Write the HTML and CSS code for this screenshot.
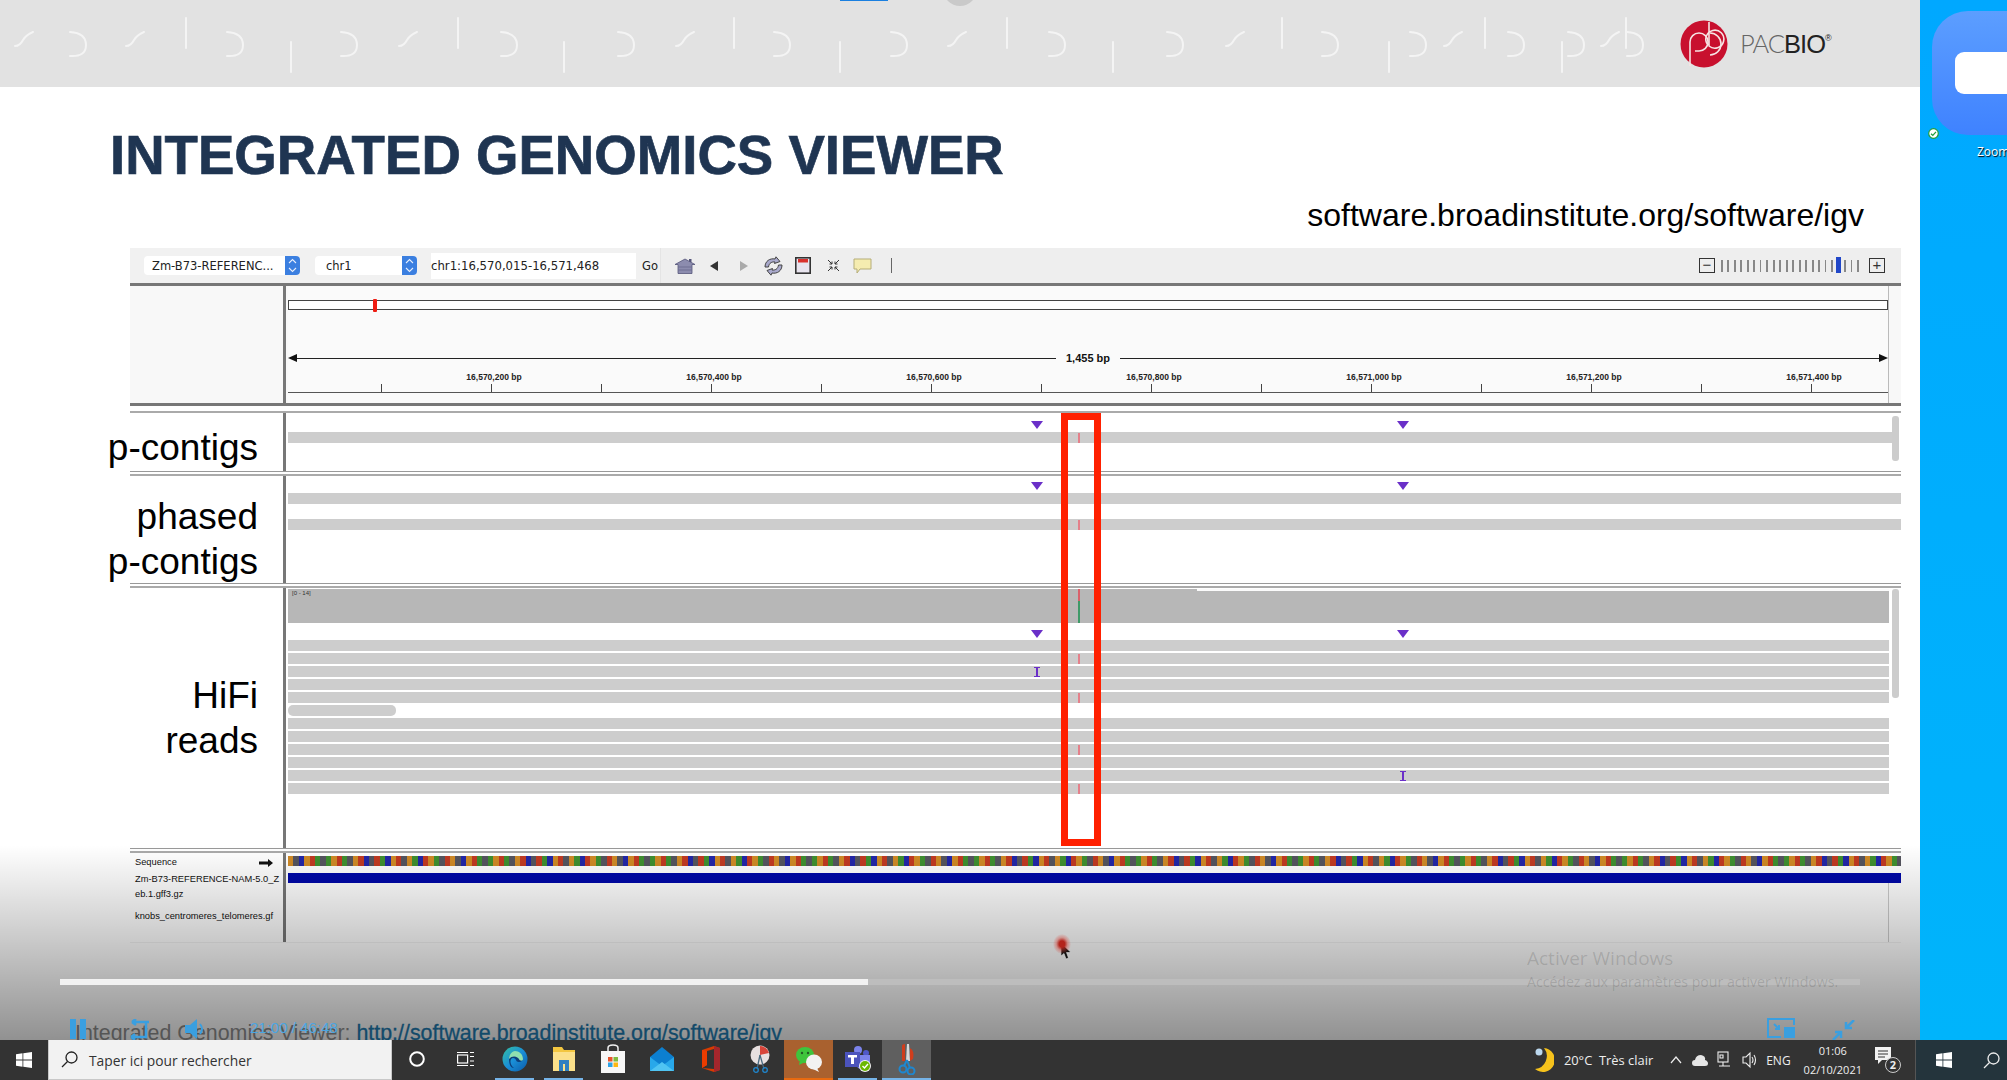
FILE: index.html
```html
<!DOCTYPE html>
<html lang="fr">

<head>
    <meta charset="UTF-8">
    <title>Integrated Genomics Viewer</title>
    <link rel="stylesheet" href="styles.css">
</head>

<body>
    <svg class="defs" width="0" height="0">
        <defs>
            <path id="sq-slash" d="M1 14Q6 14 9 8 12 3 19 0" />
            <path id="sq-curve" d="M1 1Q17 2 17 14Q17 26 1 25" />
            <path id="sq-bar" d="M1 0V30" />
            <g id="ms-logo">
                <path d="M0 2.2 6.5 1.3v6.3H0zM7.3 1.2 16 0v7.6H7.3zM0 8.4h6.5v6.3L0 13.8zM7.3 8.4H16V16l-8.7-1.2z" />
            </g>
            <g id="step-arrows" fill="none" stroke="#e6eefc" stroke-width="1.100">
                <path d="M4 7 7.500 3.500 11 7M4 12 7.500 15.500 11 12" />
            </g>
            <linearGradient id="edge-grad" x1="0" y1="0" x2="1" y2="1">
                <stop offset="0" stop-color="#35c1a0" />
                <stop offset=".5" stop-color="#1a8fd8" />
                <stop offset="1" stop-color="#0b5aa8" />
            </linearGradient>
        </defs>
    </svg>

    <div class="screen">
        <div class="stage">
            <div class="slide">
                <div class="slide-head">
                    <svg class="squiggles" width="1680" height="87">
                        <g fill="none" stroke="#f4f4f4" stroke-width="2" stroke-linecap="round">
                            <use href="#sq-slash" x="14" y="32" />
                            <use href="#sq-slash" x="125" y="32" />
                            <use href="#sq-slash" x="398" y="32" />
                            <use href="#sq-slash" x="675" y="32" />
                            <use href="#sq-slash" x="947" y="32" />
                            <use href="#sq-slash" x="1225" y="32" />
                            <use href="#sq-slash" x="1443" y="32" />
                            <use href="#sq-slash" x="1600" y="32" />
                            <use href="#sq-curve" x="69" y="31" />
                            <use href="#sq-curve" x="226" y="31" />
                            <use href="#sq-curve" x="340" y="31" />
                            <use href="#sq-curve" x="500" y="31" />
                            <use href="#sq-curve" x="617" y="31" />
                            <use href="#sq-curve" x="773" y="31" />
                            <use href="#sq-curve" x="890" y="31" />
                            <use href="#sq-curve" x="1048" y="31" />
                            <use href="#sq-curve" x="1166" y="31" />
                            <use href="#sq-curve" x="1321" y="31" />
                            <use href="#sq-curve" x="1409" y="31" />
                            <use href="#sq-curve" x="1507" y="31" />
                            <use href="#sq-curve" x="1567" y="31" />
                            <use href="#sq-curve" x="1626" y="31" />
                            <use href="#sq-bar" x="185" y="18" />
                            <use href="#sq-bar" x="457" y="18" />
                            <use href="#sq-bar" x="733" y="18" />
                            <use href="#sq-bar" x="1006" y="18" />
                            <use href="#sq-bar" x="1281" y="18" />
                            <use href="#sq-bar" x="1484" y="18" />
                            <use href="#sq-bar" x="1625" y="18" />
                            <use href="#sq-bar" x="290" y="42" />
                            <use href="#sq-bar" x="563" y="42" />
                            <use href="#sq-bar" x="839" y="42" />
                            <use href="#sq-bar" x="1112" y="42" />
                            <use href="#sq-bar" x="1388" y="42" />
                            <use href="#sq-bar" x="1561" y="42" />
                        </g>
                    </svg>
                    <svg class="pb-logo" viewBox="0 0 48 48" width="48" height="48">
                        <circle cx="24" cy="24" r="23.5" fill="#c8102e" />
                        <g fill="none" stroke="#f6e4e4" stroke-width="1.6">
                            <path d="M10 46V22a9 9 0 1 1 9 9h-4" />
                            <path d="M29 2V26a9 9 0 1 0 -1 -1" />
                            <path d="M30 13a11 11 0 0 1 0 22" />
                        </g>
                    </svg>
                    <div class="pb-name"><span class="pb-thin">PAC</span>BIO<sup>®</sup></div>
                    <div class="top-tab"></div>
                    <div class="top-dot"></div>
                </div>

                <h1 class="slide-title">INTEGRATED GENOMICS VIEWER</h1>
                <p class="slide-url">software.broadinstitute.org/software/igv</p>

                <div class="igv">
                    <div class="toolbar">
                        <div class="tb-left">
                            <div class="select select-genome"><span>Zm-B73-REFERENC...</span><svg class="stepper" width="15" height="19" viewBox="0 0 15 19"><use href="#step-arrows" /></svg></div>
                            <div class="select select-chr"><span>chr1</span><svg class="stepper" width="15" height="19" viewBox="0 0 15 19"><use href="#step-arrows" /></svg></div>
                            <div class="locus">chr1:16,570,015-16,571,468</div>
                            <span class="go">Go</span>
                        </div>
                        <div class="tools">
                            <svg class="t-home" width="20" height="16" viewBox="0 0 20 16">
                                <path d="M14 1H16.500V4H14Z" fill="#55557a" />
                                <path d="M10 1 20 6.5H17V15.5H3V6.5H0Z" fill="#8c8cae" stroke="#55557a" stroke-width=".8" />
                                <path d="M3 9H17M3 12H17" stroke="#6e6e92" />
                            </svg>
                            <svg class="t-back" width="8" height="10" viewBox="0 0 8 10"><path d="M8 0V10L0 5Z" fill="#333" /></svg>
                            <svg class="t-fwd" width="8" height="10" viewBox="0 0 8 10"><path d="M0 0V10L8 5Z" fill="#aaa" /></svg>
                            <svg class="t-sync" width="21" height="20" viewBox="0 0 21 20">
                                <g fill="#a9a9cc" stroke="#444" stroke-width="1">
                                    <path d="M2 11C2 5 7 2 12 3L13 .8 17 5.500 11.500 7.500 12 6C9 5.500 6 7 5.500 11Z" />
                                    <path d="M19 9C19 15 14 18 9 17L8 19.200 4 14.500 9.500 12.500 9 14C12 14.500 15 13 15.500 9Z" />
                                </g>
                            </svg>
                            <svg class="t-region" width="16" height="17" viewBox="0 0 16 17">
                                <rect x=".8" y=".8" width="14.400" height="15.400" fill="#e8e4ee" stroke="#333" stroke-width="1.600" />
                                <rect x="3" y="2" width="10" height="3.500" fill="#d9302c" />
                            </svg>
                            <svg class="t-fit" width="13" height="13" viewBox="0 0 13 13">
                                <path d="M1 1 5 5M12 1 8 5M1 12 5 8M12 12 8 8M5 2.500V5H2.500M8 2.500V5H10.500M5 10.500V8H2.500M8 10.500V8H10.500" stroke="#333" fill="none" />
                            </svg>
                            <svg class="t-note" width="19" height="16" viewBox="0 0 19 16">
                                <path d="M1 1H18V11H7L4 15V11H1Z" fill="#f5ecb0" stroke="#b5ad78" />
                            </svg>
                            <i class="t-sep"></i>
                        </div>
                        <div class="zoomer">
                            <i class="zoom-btn">−</i>
                            <div class="zoom-ticks"><i class="zoom-thumb"></i></div>
                            <i class="zoom-btn">+</i>
                        </div>
                    </div>

                    <div class="row row-ruler">
                        <div class="row-label"></div>
                        <div class="row-body">
                            <div class="ruler">
                                <div class="ideogram"><i class="ideo-mark"></i></div>
                                <div class="span-line">
                                    <i class="arrow-l"></i><i class="span-rule"></i><b>1,455 bp</b><i class="span-rule"></i><i class="arrow-r"></i>
                                </div>
                                <div class="coords">
                                    <span>16,570,200 bp</span><span>16,570,400 bp</span><span>16,570,600 bp</span><span>16,570,800 bp</span><span>16,571,000 bp</span><span>16,571,200 bp</span><span>16,571,400 bp</span>
                                </div>
                                <div class="ticks"></div>
                            </div>
                        </div>
                    </div>

                    <div class="row track-one">
                        <div class="row-label side-label label-one">p-contigs</div>
                        <div class="row-body">
                            <div class="marks marks-one"><i class="tri tri-a"></i><i class="tri tri-b"></i></div>
                            <div class="band band-short"><i class="snp"></i></div>
                            <i class="scroll scroll-one"></i>
                        </div>
                    </div>

                    <div class="row track-two">
                        <div class="row-label side-label label-two">phased<br>p-contigs</div>
                        <div class="row-body">
                            <div class="marks marks-two"><i class="tri tri-a"></i><i class="tri tri-b"></i></div>
                            <div class="band"></div>
                            <div class="band band-gap"><i class="snp"></i></div>
                        </div>
                    </div>

                    <div class="row track-three">
                        <div class="row-label side-label label-three">HiFi<br>reads</div>
                        <div class="row-body">
                            <div class="coverage"><i class="cov-notch"></i><span class="cov-range">[0 - 14]</span><i class="cov-snp"></i></div>
                            <div class="marks marks-three"><i class="tri tri-a"></i><i class="tri tri-b"></i></div>
                            <div class="read"></div>
                            <div class="read"><i class="snp"></i></div>
                            <div class="read"><i class="ins ins-a"></i></div>
                            <div class="read"></div>
                            <div class="read"><i class="snp"></i></div>
                            <div class="read read-short"></div>
                            <div class="read"></div>
                            <div class="read"></div>
                            <div class="read"><i class="snp"></i></div>
                            <div class="read"></div>
                            <div class="read"><i class="ins ins-b"></i></div>
                            <div class="read"><i class="snp"></i></div>
                            <i class="scroll scroll-three"></i>
                        </div>
                    </div>

                    <div class="row row-seq">
                        <div class="row-label seq-labels">
                            <div class="seq-name">Sequence <svg width="14" height="8" viewBox="0 0 14 8"><path d="M0 2.500H9V0L14 4 9 8V5.500H0Z" fill="#111" /></svg></div>
                            <div class="gene-name">Zm-B73-REFERENCE-NAM-5.0_Z<br>eb.1.gff3.gz</div>
                            <div class="knob-name">knobs_centromeres_telomeres.gf</div>
                        </div>
                        <div class="row-body">
                            <div class="sequence"></div>
                            <div class="gene"></div>
                        </div>
                    </div>

                    <div class="callout"></div>
                </div>

                <div class="player">
                    <div class="seek"><i class="seek-done"></i></div>
                    <div class="caption">Integrated Genomics Viewer: <a class="caption-link">http://software.broadinstitute.org/software/igv</a></div>

                    <div class="ctl ctl-pause"><i></i><i></i></div>
                    <svg class="ctl ctl-repeat" width="23" height="22" viewBox="0 0 23 22">
                        <path d="M22 3H5M5 3 9 0M5 3 9 6M19 3V18H4M4 18 8 15M4 18 8 21" fill="none" stroke="#3a9fe0" stroke-width="2.500" />
                    </svg>
                    <svg class="ctl ctl-volume" width="22" height="22" viewBox="0 0 22 22">
                        <path d="M0 7H5L12 1V21L5 15H0Z" fill="#3a9fe0" />
                        <path d="M15 6Q19 11 15 16" fill="none" stroke="#3a9fe0" stroke-width="2" />
                    </svg>
                    <span class="ctl ctl-time">21:00 / 46:48</span>
                    <svg class="ctl ctl-pip" width="29" height="20" viewBox="0 0 29 20">
                        <path d="M27 7V1H1V19H14" fill="none" stroke="#3a9fe0" stroke-width="2" />
                        <rect x="17" y="9" width="11" height="11" fill="#3a9fe0" />
                        <path d="M7 6 12 11M12 7V11H8" fill="none" stroke="#3a9fe0" stroke-width="2" />
                    </svg>
                    <svg class="ctl ctl-shrink" width="23" height="20" viewBox="0 0 23 20">
                        <path d="M22 0 15 7M14 2V8H20M1 20 8 13M9 18V12H3" fill="none" stroke="#3a9fe0" stroke-width="2.500" />
                    </svg>

                    <div class="activate">
                        <div class="activate-main">Activer Windows</div>
                        <div class="activate-sub">Accédez aux paramètres pour activer Windows.</div>
                    </div>

                    <div class="pointer"><i class="pointer-dot"></i>
                        <svg width="10" height="17" viewBox="0 0 10 17"><path d="M0 0V13L3 10.500 5 16 7.500 15 5.500 9.500H10Z" fill="#111" stroke="#ddd" stroke-width=".6" /></svg>
                    </div>
                </div>
            </div>

            <div class="desktop">
                <div class="zoom-tile"><div class="zoom-cam"></div></div>
                <svg class="sync-ok" width="11" height="11" viewBox="0 0 11 11">
                    <circle cx="5.500" cy="5.500" r="4.800" fill="#fff" stroke="#1f9d3c" stroke-width="1.200" />
                    <path d="M3 5.800 4.800 7.500 8 3.800" fill="none" stroke="#1f9d3c" stroke-width="1.200" />
                </svg>
                <span class="zoom-label">Zoom</span>
            </div>
        </div>

        <div class="taskbar">
            <div class="task-start"><svg width="16" height="16" viewBox="0 0 16 16" fill="#fff"><use href="#ms-logo" /></svg></div>
            <div class="task-search">
                <svg width="17" height="17" viewBox="0 0 17 17" fill="none" stroke="#222" stroke-width="1.300">
                    <circle cx="10.500" cy="6.500" r="5.500" />
                    <path d="M6.500 10.500 1 16" />
                </svg>
                <span>Taper ici pour rechercher</span>
            </div>
            <div class="slot">
                <svg width="16" height="16" viewBox="0 0 16 16"><circle cx="8" cy="8" r="6.800" fill="none" stroke="#fff" stroke-width="2" /></svg>
            </div>
            <div class="slot">
                <svg width="17" height="16" viewBox="0 0 17 16" fill="none" stroke="#fff" stroke-width="1.200">
                    <rect x=".6" y="4" width="10" height="8" />
                    <path d="M0 1.500H11M0 14.500H11M13 1.500H17M13 5.500H17M13 10H17M13 14.500H17" />
                </svg>
            </div>
            <div class="slot slot-open">
                <svg width="26" height="26" viewBox="0 0 26 26">
                    <circle cx="13" cy="13" r="12.500" fill="url(#edge-grad)" />
                    <path d="M7 13C7 8 13 6 17 8 22 10 22 16 17 16 13 16 15 12 11 12 8 12 7 18 12 22 8 22 7 17 7 13Z" fill="#0d3f7c" />
                    <path d="M13 5C17 5 21 8 21 13 21 15 19 15 17.500 14 16 10 10 9 7 13 7 9 10 5 13 5Z" fill="#8fe0b0" />
                </svg>
            </div>
            <div class="slot slot-open">
                <svg width="22" height="24" viewBox="0 0 22 24">
                    <path d="M0 0H9L11 3H22V24H0Z" fill="#f3c640" />
                    <path d="M0 5H22V24H0Z" fill="#fbe08a" />
                    <path d="M6 24V13H16V24H12V17H10V24Z" fill="#2f7fc1" />
                </svg>
            </div>
            <div class="slot">
                <svg width="24" height="30" viewBox="0 0 24 30">
                    <path d="M7 8V4Q7 1 12 1 17 1 17 4V8" fill="none" stroke="#f0f0f0" stroke-width="1.500" />
                    <rect y="7" width="24" height="22" fill="#f7f7f7" />
                    <rect x="7" y="13" width="4.500" height="4.500" fill="#e8532b" />
                    <rect x="12.500" y="13" width="4.500" height="4.500" fill="#7fbb3f" />
                    <rect x="7" y="18.500" width="4.500" height="4.500" fill="#2ea3e8" />
                    <rect x="12.500" y="18.500" width="4.500" height="4.500" fill="#fdb813" />
                </svg>
            </div>
            <div class="slot">
                <svg width="24" height="24" viewBox="0 0 24 24">
                    <path d="M0 10 12 0 24 10V24H0Z" fill="#0c7fd0" />
                    <path d="M0 10 12 19 24 10V24H0Z" fill="#28a8ea" />
                    <path d="M0 24 12 15 24 24Z" fill="#50c4f2" />
                </svg>
            </div>
            <div class="slot">
                <svg width="18" height="26" viewBox="0 0 18 26">
                    <path d="M0 4 12 0 18 2V24L12 26 0 22 12 23V3L5 5V19L0 22Z" fill="#d83b01" />
                    <path d="M12 0 18 2V24L12 26Z" fill="#a4262c" />
                    <path d="M0 4 5 5V19L0 22Z" fill="#eb3c00" />
                </svg>
            </div>
            <div class="slot">
                <svg width="22" height="28" viewBox="0 0 22 28">
                    <circle cx="11" cy="10" r="9.500" fill="#e8e0e0" />
                    <path d="M11 1A9 9 0 0 1 20 8L11 10Z" fill="#d8453a" />
                    <path d="M11 10 8 24M11 10 15 24" stroke="#4a6a80" stroke-width="1.300" />
                    <circle cx="7" cy="25" r="2.300" fill="none" stroke="#1f87cf" stroke-width="1.300" />
                    <circle cx="16" cy="25" r="2.300" fill="none" stroke="#1f87cf" stroke-width="1.300" />
                </svg>
            </div>
            <div class="slot slot-wechat">
                <svg width="26" height="26" viewBox="0 0 26 26">
                    <ellipse cx="9" cy="9" rx="9" ry="8" fill="#3ec43c" />
                    <path d="M4 14 3 19 9 16Z" fill="#3ec43c" />
                    <ellipse cx="18" cy="16" rx="8" ry="7.500" fill="#f2f2f2" />
                    <path d="M21 22 23 26 17 23Z" fill="#f2f2f2" />
                    <circle cx="6" cy="7" r="1.200" fill="#245a24" />
                    <circle cx="12" cy="7" r="1.200" fill="#245a24" />
                </svg>
            </div>
            <div class="slot slot-open">
                <svg width="28" height="28" viewBox="0 0 28 28">
                    <circle cx="14" cy="5" r="4" fill="#7b83eb" />
                    <circle cx="22" cy="8" r="3" fill="#5059c9" />
                    <path d="M12 10H26V20Q26 25 21 25 14 25 12 20Z" fill="#7b83eb" />
                    <rect x="1" y="7" width="15" height="15" fill="#4b53bc" />
                    <path d="M4 10H13V12.500H10V19H7V12.500H4Z" fill="#fff" />
                    <circle cx="21" cy="21" r="6" fill="#f2f2f2" />
                    <circle cx="21" cy="21" r="5" fill="#6bb700" />
                    <path d="M18.500 21 20.500 23 24 19" fill="none" stroke="#fff" stroke-width="1.400" />
                </svg>
            </div>
            <div class="slot slot-active">
                <svg width="18" height="32" viewBox="0 0 18 32">
                    <path d="M4 3Q4 1 7 1V18L4 18Z" fill="#cf3d1c" />
                    <path d="M11 1 12 18 8 18 9 1Z" fill="#d8d8d8" />
                    <path d="M12 5Q17 8 15 16L12 18Z" fill="#cf3d1c" />
                    <circle cx="5" cy="26" r="3.500" fill="none" stroke="#1f87cf" stroke-width="2" />
                    <circle cx="13" cy="28" r="3.500" fill="none" stroke="#1f87cf" stroke-width="2" />
                    <path d="M6 23 9 17M12 25 9 17" stroke="#1f87cf" stroke-width="2" />
                </svg>
            </div>

            <div class="tray">
                <svg class="tray-moon" width="20" height="26" viewBox="0 0 20 26">
                    <path d="M10 1A12 12 0 1 1 1 22 13 13 0 0 0 10 1Z" fill="#f6c21c" />
                    <circle cx="5" cy="5" r="3.500" fill="#bcd8ee" />
                </svg>
                <span class="tray-weather">20°C&nbsp;&nbsp;Très clair</span>
                <svg class="tray-caret" width="12" height="8" viewBox="0 0 12 8"><path d="M1 7 6 1 11 7" fill="none" stroke="#eee" stroke-width="1.200" /></svg>
                <svg class="tray-cloud" width="16" height="14" viewBox="0 0 16 14">
                    <path d="M3 13Q0 13 0 10 0 7 3 7 4 2 9 2 14 3 13 7 16 8 16 10.500 16 13 13 13Z" fill="#e6e6e6" />
                </svg>
                <svg class="tray-net" width="16" height="18" viewBox="0 0 16 18" fill="none" stroke="#eee" stroke-width="1.100">
                    <rect x="1" y="1" width="10" height="10" />
                    <path d="M6 11V15M2 15H13M3 4H6V7H3Z" />
                </svg>
                <svg class="tray-vol" width="15" height="18" viewBox="0 0 15 18" fill="none" stroke="#eee" stroke-width="1.100">
                    <path d="M1 6H4L8 2V16L4 12H1Z" />
                    <path d="M10 6Q12 9 10 12M12 4Q15 9 12 14" />
                </svg>
                <span class="tray-lang">ENG</span>
                <div class="tray-clock"><span>01:06</span><span>02/10/2021</span></div>
                <div class="tray-notes">
                    <svg width="17" height="18" viewBox="0 0 17 18"><path d="M0 0H16V13H7L3 17V13H0Z" fill="#f2f2f2" /><path d="M3 4H13M3 7H13M3 10H10" stroke="#333" stroke-width="1.200" /></svg>
                    <b>2</b>
                </div>
            </div>
            <div class="task-remote">
                <svg width="16" height="16" viewBox="0 0 16 16" fill="#fff"><use href="#ms-logo" /></svg>
                <svg width="17" height="17" viewBox="0 0 17 17" fill="none" stroke="#eee" stroke-width="1.300">
                    <circle cx="10.500" cy="6.500" r="5.500" />
                    <path d="M6.500 10.500 1 16" />
                </svg>
            </div>
        </div>
    </div>
</body>

</html>
```

FILE: styles.css
```css
* {
    box-sizing: border-box;
}

body {
    margin: 0;
    width: 2007px;
    height: 1080px;
    overflow: hidden;
    background-color: #333;
    font-family: "Liberation Sans", Arial, sans-serif;
}

i {
    display: block;
    font-style: normal;
}

.defs {
    position: absolute;
}

.screen {
    display: flex;
    flex-direction: column;
    height: 1080px;
}

.stage {
    display: flex;
    height: 1040px;
}

/* slide */

.slide {
    position: relative;
    flex: none;
    width: 1920px;
    overflow: hidden;
    background-color: #fff;
}

.slide-head {
    position: relative;
    display: flex;
    align-items: center;
    height: 87px;
    background-color: #e2e2e2;
}

.squiggles {
    flex: none;
}

.pb-logo {
    flex: none;
}

.pb-name {
    margin-left: 12px;
    font-size: 25.500px;
    line-height: 30px;
    font-weight: 400;
    letter-spacing: -1px;
    color: #222;
}

.pb-thin {
    font-family: Lato, sans-serif;
    font-weight: 300;
    color: #666;
}

.pb-name sup {
    font-size: 9px;
    line-height: 0;
    vertical-align: 12px;
}

.top-tab {
    position: absolute;
    left: 840px;
    top: 0;
    width: 48px;
    height: 1px;
    background-color: #1a7fe0;
}

.top-dot {
    position: absolute;
    left: 943px;
    top: -28px;
    width: 34px;
    height: 34px;
    border-radius: 50%;
    background-color: #c9c9c9;
}

.slide-title {
    margin: 41px 0 0 110px;
    font-size: 54.600px;
    line-height: 56px;
    font-weight: 700;
    white-space: nowrap;
    color: #1f3552;
    -webkit-text-stroke: 0.7px #1f3552;
}

.slide-url {
    margin: 13px 56px 0 0;
    font-size: 32px;
    line-height: 36px;
    text-align: right;
    color: #000;
}

/* igv panel */

.igv {
    position: relative;
    width: 1771px;
    margin: 15px 0 0 130px;
}

.toolbar {
    display: flex;
    align-items: center;
    height: 38px;
    border-bottom: 3px solid #777;
    background-color: #eee;
    font-family: "DejaVu Sans", sans-serif;
    font-size: 11.500px;
    color: #222;
}

.tb-left {
    display: flex;
    align-items: center;
    width: 531px;
    height: 35px;
    padding-left: 14px;
    border-right: 1px solid #e4e4e4;
    background-color: #f1f1f1;
}

.select {
    display: flex;
    align-items: center;
    justify-content: space-between;
    height: 19px;
    border-radius: 4px;
    background-color: #fff;
    white-space: nowrap;
}

.select-genome {
    width: 156px;
    padding-left: 8px;
}

.select-chr {
    width: 102px;
    margin-left: 15px;
    padding-left: 11px;
}

.stepper {
    flex: none;
    border-radius: 0 4px 4px 0;
    background-color: #3b7fe0;
}

.locus {
    width: 205px;
    height: 26px;
    margin-left: 14px;
    font-size: 11.700px;
    line-height: 26px;
    background-color: #fff;
    white-space: nowrap;
}

.go {
    margin-left: 6px;
}

.tools {
    display: flex;
    align-items: center;
    padding-left: 14px;
}

.t-back {
    margin-left: 15px;
}

.t-fwd {
    margin-left: 22px;
}

.t-sync {
    margin-left: 15px;
}

.t-region {
    margin-left: 11px;
}

.t-fit {
    margin-left: 16px;
}

.t-note {
    margin-left: 13px;
}

.t-sep {
    width: 1px;
    height: 15px;
    margin-left: 19px;
    background-color: #666;
}

.zoomer {
    display: flex;
    align-items: center;
    margin-left: auto;
    padding-right: 16px;
}

.zoom-btn {
    width: 16px;
    height: 15px;
    border: 1.500px solid #333;
    font-family: "Liberation Sans", sans-serif;
    font-size: 15px;
    line-height: 12px;
    text-align: center;
    color: #333;
}

.zoom-ticks {
    position: relative;
    width: 141px;
    height: 12px;
    margin: 0 7px 0 6px;
    background-image: repeating-linear-gradient(90deg, #888 0 1.500px, transparent 1.500px 6.500px);
}

.zoom-thumb {
    position: absolute;
    left: 115px;
    top: -3px;
    width: 5px;
    height: 16px;
    background-color: #2147c8;
}

.row {
    display: flex;
}

.row-label {
    flex: none;
    width: 153px;
}

.row-body {
    position: relative;
    flex: 1;
    padding-left: 2px;
    border-left: 3px solid #777;
}

.row-ruler {
    height: 120px;
    border-bottom: 3px solid #777;
    background-color: #f8f8f8;
}

.ruler {
    width: 1601px;
    height: 117px;
    padding-top: 14px;
    border-right: 1px solid #bbb;
    background-color: #fafafa;
}

.ideogram {
    position: relative;
    height: 10px;
    border: 1px solid #444;
    background-color: #fff;
}

.ideo-mark {
    position: absolute;
    left: 84px;
    top: -2px;
    width: 4px;
    height: 13px;
    border-radius: 1px;
    background-color: #ee1c12;
}

.span-line {
    display: flex;
    align-items: center;
    height: 14px;
    margin-top: 41px;
    font-size: 11px;
    color: #111;
}

.span-line b {
    padding: 0 10px;
}

.span-rule {
    flex: 1;
    height: 1px;
    background-color: #222;
}

.arrow-l {
    border-top: 4px solid transparent;
    border-bottom: 4px solid transparent;
    border-right: 9px solid #111;
}

.arrow-r {
    border-top: 4px solid transparent;
    border-bottom: 4px solid transparent;
    border-left: 9px solid #111;
}

.coords {
    display: grid;
    grid-template-columns: repeat(7, 220px);
    height: 12px;
    margin-top: 6px;
    padding-left: 96px;
    font-size: 8.500px;
    line-height: 12px;
    font-weight: 700;
    text-align: center;
    white-space: nowrap;
    color: #222;
}

.ticks {
    height: 9px;
    margin-top: 1px;
    border-bottom: 1px solid #555;
    background-image: linear-gradient(90deg, #444 1px, transparent 1px);
    background-size: 110px 100%;
    background-position: 93px 0;
    background-repeat: repeat-x;
}

.track-one,
.track-two,
.track-three {
    border-top: 2px solid #aaa;
    border-bottom: 1px solid #999;
}

.track-one {
    height: 61px;
    margin-top: 5px;
}

.track-two {
    height: 110px;
    margin-top: 2px;
}

.track-three {
    height: 263px;
    margin-top: 2px;
}

.side-label {
    width: 183px;
    margin-left: -30px;
    padding-right: 25px;
    font-size: 37px;
    line-height: 45px;
    text-align: right;
    white-space: nowrap;
    color: #000;
}

.label-one {
    padding-top: 12px;
}

.label-two {
    padding-top: 18px;
}

.label-three {
    padding-top: 85px;
}

.marks {
    position: relative;
}

.marks-one {
    height: 19px;
}

.marks-one .tri,
.marks-two .tri {
    bottom: 3px;
}

.marks-two {
    height: 17px;
}

.marks-three {
    height: 17px;
}

.tri {
    position: absolute;
    bottom: 2px;
    width: 0;
    height: 0;
    border-left: 6px solid transparent;
    border-right: 6px solid transparent;
    border-top: 8px solid #6a2fc8;
}

.tri-a {
    left: 743px;
}

.tri-b {
    left: 1109px;
}

.band {
    position: relative;
    height: 11px;
    background-color: #cdcdcd;
}

.band-short {
    width: 1604px;
}

.band-gap {
    margin-top: 15px;
}

.snp {
    position: absolute;
    left: 790px;
    top: 1px;
    width: 2px;
    height: 10px;
    background-color: #e4808a;
}

.coverage {
    position: relative;
    width: 1601px;
    height: 34px;
    margin-top: 1px;
    background-color: #b7b7b7;
}

.cov-notch {
    position: absolute;
    left: 909px;
    right: 0;
    top: 0;
    height: 2px;
    background-color: #fbfbfb;
}

.cov-range {
    position: absolute;
    left: 4px;
    top: 0;
    font-size: 6px;
    line-height: 9px;
    color: #333;
}

.cov-snp {
    position: absolute;
    left: 790px;
    top: 0;
    width: 2px;
    height: 34px;
    background-image: linear-gradient(#d9606a 35%, #3f9a68 35%);
}

.read {
    position: relative;
    width: 1601px;
    height: 11px;
    margin-bottom: 2px;
    background-color: #cdcdcd;
}

.read-short {
    width: 108px;
    border-radius: 5px;
}

.ins {
    position: absolute;
    top: 1px;
    width: 6px;
    height: 10px;
    border-top: 1.500px solid #6a2fc8;
    border-bottom: 1.500px solid #6a2fc8;
    background-image: linear-gradient(#6a2fc8, #6a2fc8);
    background-size: 2px 100%;
    background-position: center;
    background-repeat: no-repeat;
}

.ins-a {
    left: 746px;
}

.ins-b {
    left: 1112px;
}

.scroll {
    position: absolute;
    left: 1606px;
    width: 7px;
    border-radius: 3px;
    background-color: #ccc;
}

.scroll-one {
    top: 3px;
    height: 45px;
}

.scroll-three {
    top: 1px;
    height: 109px;
}

.row-seq {
    height: 92px;
    margin-top: 2px;
    border-top: 2px solid #aaa;
    border-bottom: 1px solid rgba(0, 0, 0, 0.05);
}

.seq-labels {
    padding: 2px 0 0 5px;
    font-size: 9.300px;
    line-height: 15px;
    color: #111;
}

.seq-name {
    display: flex;
    align-items: center;
    justify-content: space-between;
    height: 15px;
    padding-right: 10px;
}

.gene-name {
    margin-top: 2px;
    white-space: nowrap;
}

.knob-name {
    margin-top: 7px;
    white-space: nowrap;
}

.row-seq .row-body::after {
    content: "";
    position: absolute;
    left: 1602px;
    top: 30px;
    bottom: 0;
    width: 1px;
    background-color: #ccc;
}

.sequence {
    height: 10px;
    margin-top: 3px;
    --r: #c23a22;
    --o: #d08a26;
    --g: #3f9030;
    --b: #2226a8;
    --k: #55555f;
    background-image: repeating-linear-gradient(90deg,
            var(--o) 0 5.4px, var(--k) 0 10.8px, var(--b) 0 16.2px, var(--o) 0 21.6px, var(--r) 0 27px,
            var(--g) 0 32.4px, var(--k) 0 37.8px, var(--g) 0 43.2px, var(--o) 0 48.6px, var(--r) 0 54px,
            var(--g) 0 59.4px, var(--k) 0 64.8px, var(--o) 0 70.2px, var(--r) 0 75.6px, var(--b) 0 81px,
            var(--k) 0 86.4px, var(--r) 0 91.8px, var(--g) 0 97.2px, var(--b) 0 102.6px, var(--o) 0 108px,
            var(--r) 0 113.4px, var(--k) 0 118.8px, var(--o) 0 124.2px, var(--g) 0 129.6px, var(--b) 0 135px,
            var(--r) 0 140.4px, var(--o) 0 145.8px, var(--g) 0 151.2px, var(--k) 0 156.6px, var(--r) 0 162px);
}

.gene {
    height: 10px;
    margin-top: 7px;
    background-color: #0008a8;
}

.callout {
    position: absolute;
    left: 931px;
    top: 165px;
    width: 40px;
    height: 433px;
    border: 7px solid #ff2000;
}

/* player controls over the slide */

.player {
    position: absolute;
    left: 0;
    right: 0;
    top: 845px;
    bottom: 0;
    background-image: linear-gradient(rgba(0, 0, 0, 0) 0, rgba(0, 0, 0, 0.43) 100%);
}

.seek {
    width: 1800px;
    height: 6px;
    margin: 134px 60px 0;
    background-color: #bdbdbd;
}

.seek-done {
    width: 808px;
    height: 6px;
    background-color: #f2f2f2;
}

.caption {
    margin: 35px 0 0 75px;
    font-size: 21.400px;
    line-height: 26px;
    white-space: nowrap;
    color: #555;
}

.caption-link {
    color: #124a6a;
    -webkit-text-stroke: 0.3px #124a6a;
}

.ctl {
    position: absolute;
}

.ctl-pause {
    left: 70px;
    top: 174px;
    display: flex;
    gap: 4px;
}

.ctl-pause i {
    width: 6px;
    height: 20px;
    background-color: #3a9fe0;
}

.ctl-repeat {
    left: 127px;
    top: 174px;
}

.ctl-volume {
    left: 185px;
    top: 173px;
}

.ctl-time {
    left: 250px;
    top: 174px;
    font-size: 15px;
    line-height: 18px;
    white-space: nowrap;
    color: #4aa6e2;
}

.ctl-pip {
    left: 1767px;
    top: 173px;
}

.ctl-shrink {
    left: 1832px;
    top: 175px;
}

.activate {
    position: absolute;
    left: 1527px;
    top: 100px;
    font-family: "Open Sans", sans-serif;
    color: rgba(0, 0, 0, 0.14);
}

.activate-main {
    font-size: 19px;
    line-height: 26px;
}

.activate-sub {
    margin-top: 2px;
    font-size: 14.100px;
    line-height: 18px;
}

.pointer {
    position: absolute;
    left: 1061px;
    top: 98px;
}

.pointer svg {
    display: block;
}

.pointer-dot {
    position: absolute;
    left: -8px;
    top: -9px;
    width: 18px;
    height: 20px;
    border-radius: 50%;
    background-image: radial-gradient(#b3241c 22%, rgba(214, 60, 50, 0.4) 45%, rgba(214, 60, 50, 0) 72%);
}

/* desktop strip */

.desktop {
    position: relative;
    flex: 1;
    overflow: hidden;
    background-image: linear-gradient(#00a8ff, #00b4fb);
}

.zoom-tile {
    position: absolute;
    left: 12px;
    top: 11px;
    width: 124px;
    height: 124px;
    padding: 41px 0 0 23px;
    border-radius: 36px;
    background-image: linear-gradient(#5c9eff, #3f82ff);
}

.zoom-cam {
    width: 80px;
    height: 42px;
    border-radius: 9px;
    background-color: #fff;
}

.sync-ok {
    position: absolute;
    left: 8px;
    top: 128px;
}

.zoom-label {
    position: absolute;
    left: 57px;
    top: 144px;
    font-family: "Open Sans", sans-serif;
    font-size: 12px;
    line-height: 15px;
    color: #fff;
    text-shadow: 1px 1px 1px #000;
}

/* taskbar */

.taskbar {
    display: flex;
    height: 40px;
    background-color: #333;
    font-family: "Open Sans", sans-serif;
    color: #eee;
}

.task-start {
    display: flex;
    align-items: center;
    justify-content: center;
    flex: none;
    width: 48px;
}

.task-search {
    display: flex;
    align-items: center;
    flex: none;
    width: 344px;
    padding-left: 12px;
    border: 1px solid #c8c8c8;
    border-top: 0;
    background-color: #f2f2f2;
    font-size: 13.800px;
    color: #333;
}

.task-search span {
    margin: 2px 0 0 11px;
}

.slot {
    display: flex;
    align-items: center;
    justify-content: center;
    flex: none;
    width: 49px;
    border-bottom: 2px solid transparent;
}

.slot-open {
    position: relative;
}

.slot-open::after {
    content: "";
    position: absolute;
    left: 5px;
    right: 5px;
    bottom: -2px;
    height: 2px;
    background-color: #76b4e8;
}

.slot-wechat {
    background-color: #a9612f;
    border-bottom-color: #e86a10;
}

.slot-active {
    background-color: #5f5f5f;
    border-bottom-color: #76b4e8;
}

.tray {
    display: flex;
    align-items: center;
    margin-left: auto;
    padding-right: 15px;
    font-size: 12px;
}

.tray-weather {
    margin-left: 10px;
    font-size: 12.900px;
    white-space: nowrap;
}

.tray-caret {
    margin-left: 17px;
}

.tray-cloud {
    margin-left: 10px;
}

.tray-net {
    margin-left: 9px;
}

.tray-vol {
    margin-left: 9px;
}

.tray-lang {
    margin-left: 9px;
}

.tray-clock {
    display: flex;
    flex-direction: column;
    align-items: center;
    margin-left: 13px;
    font-size: 11px;
    line-height: 19px;
}

.tray-notes {
    position: relative;
    margin-left: 13px;
    width: 25px;
    height: 26px;
}

.tray-notes b {
    position: absolute;
    left: 10px;
    top: 10px;
    width: 16px;
    height: 16px;
    border: 1px solid #ccc;
    border-radius: 50%;
    background-color: #333;
    font-size: 11px;
    line-height: 14px;
    text-align: center;
}

.task-remote {
    display: flex;
    align-items: center;
    justify-content: space-between;
    flex: none;
    width: 92px;
    padding: 0 7px 0 20px;
    border-left: 1px solid #555;
    background-color: #24343c;
}
```
